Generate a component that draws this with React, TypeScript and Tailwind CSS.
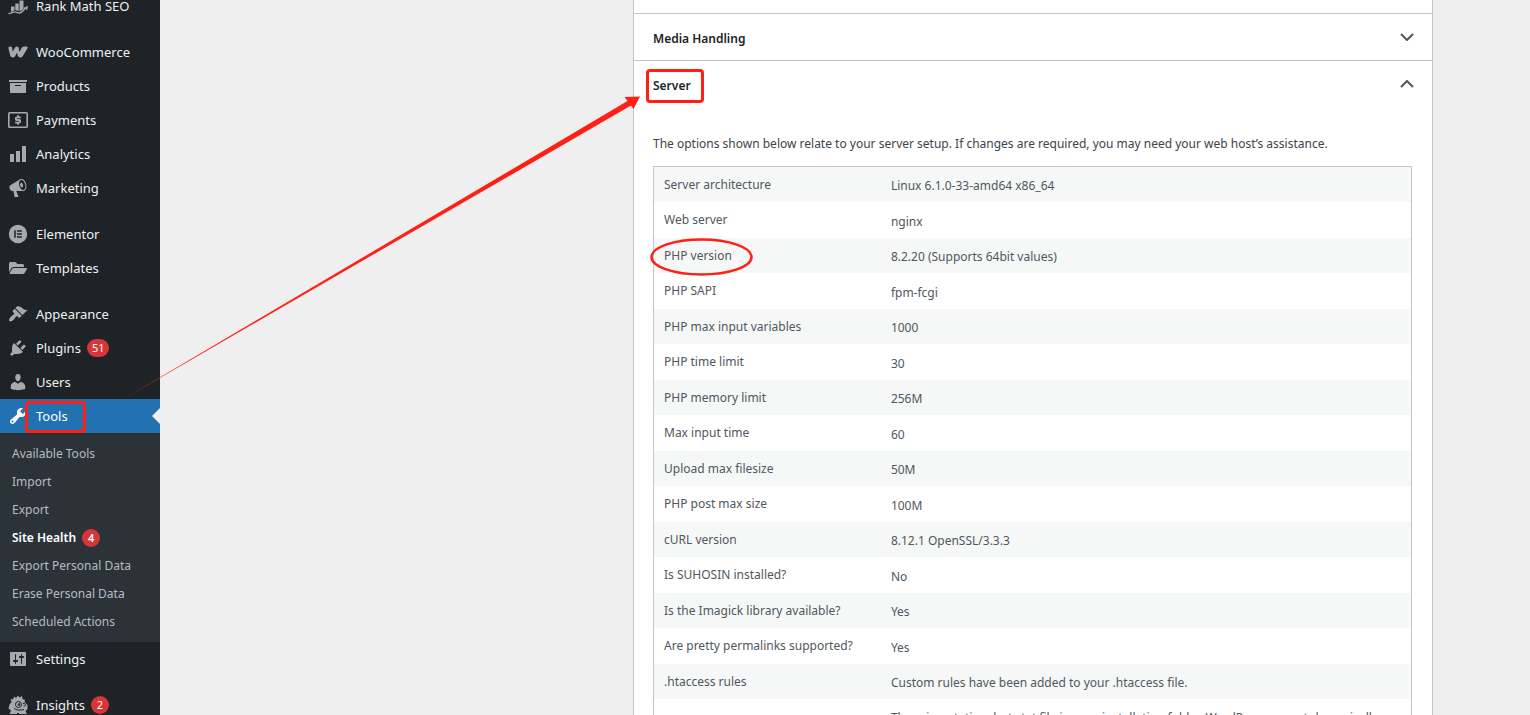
import React from 'react';
import { FaFolderOpen } from 'react-icons/fa';

const iconPaths = {
  products: 'M19 4v2H1V4h18zM2 7h16v10H2V7zm11 3V9H7v1h6z',
  analytics: 'M18 18V2h-4v16h4zm-6 0V7H8v11h4zm-6 0v-8H2v8h4z',
  marketing:
    'M18.15 5.94c.46 1.62.38 3.22-.02 4.48-.42 1.28-1.26 2.18-2.3 2.48-.16.06-.26.06-.4.06-.06.02-.12.02-.18.02-.06.02-.14.02-.22.02h-6.8l2.22 5.5c.02.14-.06.26-.14.34-.08.1-.24.16-.34.16H6.95c-.1 0-.26-.06-.34-.16-.08-.08-.16-.2-.14-.34l-1-5.5H4.25l-.02-.02c-.5.06-1.08-.18-1.54-.62s-.88-1.08-1.06-1.88c-.24-.8-.2-1.56-.02-2.2.18-.62.58-1.08 1.06-1.3l.02-.02 9-5.4c.1-.06.18-.1.24-.16.06-.04.14-.08.24-.12.16-.08.28-.12.5-.18 1.04-.3 2.24.1 3.22.98s1.84 2.24 2.26 3.86zm-2.58 5.98h-.02c.4-.1.74-.34 1.04-.7.58-.7.86-1.76.86-3.04 0-.64-.1-1.3-.28-1.98-.34-1.36-1.02-2.5-1.78-3.24s-1.68-1.1-2.46-.88c-.82.22-1.4.96-1.7 2-.32 1.04-.28 2.36.06 3.72.38 1.36 1 2.5 1.8 3.24.78.74 1.62 1.1 2.48.88zm-2.54-7.08c.22-.04.42-.02.62.04.38.16.76.48 1.02 1s.42 1.2.42 1.78c0 .3-.04.56-.12.8-.18.48-.44.84-.86.94-.34.1-.8-.06-1.14-.4s-.64-.86-.78-1.5c-.18-.62-.12-1.24.02-1.72s.48-.84.82-.94z',
  appearance:
    'M14.48 11.06L7.41 3.99l1.5-1.5c.5-.56 2.3-.47 3.51.32 1.21.8 1.43 1.28 2.91 2.1 1.18.64 2.45 1.26 4.45.85zm-.71.71L6.7 4.7 4.93 6.47c-.39.39-.39 1.02 0 1.41l1.06 1.06c.39.39.39 1.03 0 1.42-.6.6-1.43 1.11-2.21 1.69-.35.26-.7.53-1.01.84C1.43 14.23.4 16.08 1.4 17.07c.99 1 2.84-.03 4.18-1.36.31-.31.58-.66.85-1.02.57-.78 1.08-1.61 1.69-2.21.39-.39 1.02-.39 1.41 0l1.06 1.06c.39.39 1.02.39 1.41 0z',
  plugins:
    'M13.11 4.36L9.87 7.6 8 5.73l3.24-3.24c.35-.34 1.05-.2 1.56.32.52.51.66 1.21.31 1.55zm-8 1.77l.91-1.12 9.01 9.01-1.19.84c-.71.71-2.63 1.16-3.82 1.16H6.14L4.9 17.26c-.59.59-1.54.59-2.12 0-.59-.58-.59-1.53 0-2.12l1.24-1.24v-3.88c0-1.13.4-3.19 1.09-3.89zm7.26 3.97l3.24-3.24c.34-.35 1.04-.21 1.55.31.52.51.66 1.21.31 1.55l-3.24 3.25z',
  users:
    'M10 9.25c-2.27 0-2.73-3.44-2.73-3.44C7 4.02 7.82 2 9.97 2c2.16 0 2.98 2.02 2.71 3.81 0 0-.41 3.44-2.68 3.44zm0 2.57L12.72 10c2.39 0 4.52 2.33 4.52 4.53v2.49s-3.65 1.13-7.24 1.13c-3.65 0-7.24-1.13-7.24-1.13v-2.49c0-2.25 1.94-4.48 4.47-4.48z',
  tools:
    'M16.68 9.77c-1.34 1.34-3.3 1.67-4.95.99l-5.41 6.52c-.99.99-2.59.99-3.58 0s-.99-2.59 0-3.57l6.52-5.42c-.68-1.65-.35-3.61.99-4.95 1.28-1.28 3.12-1.62 4.72-1.06l-2.89 2.89 2.82 2.82 2.86-2.87c.53 1.58.18 3.39-1.08 4.65zM3.81 16.21c.4.39 1.04.39 1.43 0 .4-.4.4-1.04 0-1.43-.39-.4-1.03-.4-1.43 0-.39.39-.39 1.03 0 1.43z',
  settings:
    'M18 16V4c0-.55-.45-1-1-1H3c-.55 0-1 .45-1 1v12c0 .55.45 1 1 1h14c.55 0 1-.45 1-1zM8 11h1c.55 0 1 .45 1 1s-.45 1-1 1H8v1.5c0 .28-.22.5-.5.5s-.5-.22-.5-.5V13H6c-.55 0-1-.45-1-1s.45-1 1-1h1V5.5c0-.28.22-.5.5-.5s.5.22.5.5V11zm5-2h-1c-.55 0-1-.45-1-1s.45-1 1-1h1V5.5c0-.28.22-.5.5-.5s.5.22.5.5V7h1c.55 0 1 .45 1 1s-.45 1-1 1h-1v5.5c0 .28-.22.5-.5.5s-.5-.22-.5-.5V9z',
};

function PathIcon({ name }: { name: keyof typeof iconPaths }) {
  return (
    <svg viewBox="0 0 20 20" className="size-5" fill="currentColor" aria-hidden="true">
      <path d={iconPaths[name]} />
    </svg>
  );
}

function RankMathIcon() {
  return (
    <svg viewBox="0 0 20 20" className="size-5" fill="currentColor" aria-hidden="true">
      <path d="M3 10.500h3.500v4L3 16zM7.300 7.500h3.400v7.500l-3.400-1zM11.500 4.500h4v8.500L11.500 15.500z" />
      <path d="M0.500 17.500c2.500 0 4.500-1.700 6.200-1.700s2.500 1.200 4.300 1.200c2.500 0 4.500-2.500 6.500-5" fill="none" stroke="currentColor" strokeWidth="1.300" />
      <path d="M20 9.800l-.8 4.400-3.400-2.400z" />
    </svg>
  );
}

function WooIcon() {
  return (
    <svg viewBox="0 0 20 20" className="size-5" fill="currentColor" aria-hidden="true">
      <path d="M0.300 5.800Q0.800 4.500 2.500 4.500Q4 4.500 4.200 6L4.600 9.800L7.200 5.300Q7.800 4.500 9 4.500Q10.700 4.500 10.800 6L11.200 10L14 5.400Q14.700 4.500 16.200 4.500H18.500Q20.200 4.700 19.500 6.200L14.700 14.300Q13.800 15.500 12.400 15.500Q10.500 15.500 9.900 13.800L9 10.800L6.900 14.400Q6.200 15.500 4.600 15.500Q2.800 15.500 2.300 13.800Z" />
    </svg>
  );
}

function PaymentsIcon() {
  return (
    <svg viewBox="0 0 20 20" className="size-5" fill="none" stroke="currentColor" aria-hidden="true">
      <rect x="0.800" y="2.800" width="18.400" height="14.400" rx="0.800" strokeWidth="1.600" />
      <path d="M12.800 7.400H9a1.300 1.300 0 0 0 0 2.600h2a1.300 1.300 0 0 1 0 2.600H7.200M10 5.200v2.300M10 12.500v2.300" strokeWidth="1.800" />
    </svg>
  );
}

function ElementorIcon() {
  return (
    <svg viewBox="0 0 20 20" className="size-5" aria-hidden="true">
      <circle cx="10" cy="10" r="9.200" fill="currentColor" />
      <path d="M7 6.200v7.600M9 7h4.800M9 10h4.800M9 13h4.800" stroke="#1d2327" strokeWidth="1.500" />
    </svg>
  );
}

function InsightsIcon() {
  return (
    <svg viewBox="0 0 20 20" className="size-5" aria-hidden="true">
      <path d="M3.500 7l-1-3 2.500 .5L6 1.500 8 3l2-2.500L11.500 2.500 14 1l.5 3 2.500 1-.5 2 3 3v4l-2 2 1.500 3H11v-1H9v1H1.500L3 15.500l-2.500-2 1-4z" fill="currentColor" />
      <g fill="none" stroke="#1d2327">
        <circle cx="10.500" cy="9.500" r="3" />
        <path d="M15 8.500c1.500-.5 2.500.5 2.500 1.500s-1 1.500-2 1M6 13c2 2.500 5.500 2.500 10 1.500" />
      </g>
      <circle cx="11" cy="9.500" r="1.200" fill="#1d2327" />
    </svg>
  );
}

interface MenuEntry {
  label: string;
  icon: React.ReactNode;
  count?: number;
  current?: boolean;
}

const menuGroups: MenuEntry[][] = [
  [{ label: 'Rank Math SEO', icon: <RankMathIcon /> }],
  [
    { label: 'WooCommerce', icon: <WooIcon /> },
    { label: 'Products', icon: <PathIcon name="products" /> },
    { label: 'Payments', icon: <PaymentsIcon /> },
    { label: 'Analytics', icon: <PathIcon name="analytics" /> },
    { label: 'Marketing', icon: <PathIcon name="marketing" /> },
  ],
  [
    { label: 'Elementor', icon: <ElementorIcon /> },
    { label: 'Templates', icon: <FaFolderOpen className="size-[18px]" aria-hidden="true" /> },
  ],
  [
    { label: 'Appearance', icon: <PathIcon name="appearance" /> },
    { label: 'Plugins', icon: <PathIcon name="plugins" />, count: 51 },
    { label: 'Users', icon: <PathIcon name="users" /> },
    { label: 'Tools', icon: <PathIcon name="tools" />, current: true },
    { label: 'Settings', icon: <PathIcon name="settings" /> },
  ],
  [{ label: 'Insights', icon: <InsightsIcon />, count: 2 }],
];

const toolsSubmenu: { label: string; count?: number }[] = [
  { label: 'Available Tools' },
  { label: 'Import' },
  { label: 'Export' },
  { label: 'Site Health', count: 4 },
  { label: 'Export Personal Data' },
  { label: 'Erase Personal Data' },
  { label: 'Scheduled Actions' },
];

const serverInfo = [
  ['Server architecture', 'Linux 6.1.0-33-amd64 x86_64'],
  ['Web server', 'nginx'],
  ['PHP version', '8.2.20 (Supports 64bit values)'],
  ['PHP SAPI', 'fpm-fcgi'],
  ['PHP max input variables', '1000'],
  ['PHP time limit', '30'],
  ['PHP memory limit', '256M'],
  ['Max input time', '60'],
  ['Upload max filesize', '50M'],
  ['PHP post max size', '100M'],
  ['cURL version', '8.12.1 OpenSSL/3.3.3'],
  ['Is SUHOSIN installed?', 'No'],
  ['Is the Imagick library available?', 'Yes'],
  ['Are pretty permalinks supported?', 'Yes'],
  ['.htaccess rules', 'Custom rules have been added to your .htaccess file.'],
  [
    'robots.txt',
    'There is a static robots.txt file in your installation folder. WordPress cannot dynamically serve one.',
  ],
];

function CountBadge({ count }: { count: number }) {
  return (
    <span className="flex h-[18px] min-w-[18px] items-center justify-center rounded-full bg-[#d63638] px-[5px] text-[11px] text-white">
      {count}
    </span>
  );
}

function MenuItem({ item }: { item: MenuEntry }) {
  return (
    <li>
      <a
        href="#"
        aria-current={item.current ? 'true' : undefined}
        className={`relative flex h-[34px] items-center text-[13px] ${item.current ? 'bg-[#2271b1] text-white' : 'text-[#f0f0f1]'}`}
      >
        <span className={`flex w-9 justify-center ${item.current ? 'text-white' : 'text-[#a7aaad]'}`}>
          {item.icon}
        </span>
        <span className="mr-1.5 pt-0.5">{item.label}</span>
        {item.count && <CountBadge count={item.count} />}
        {item.current && (
          <>
            <span className="absolute top-[9px] right-0 border-y-8 border-r-8 border-y-transparent border-r-[#efefef]" />
            <span className="absolute top-0.5 left-[25px] h-8 w-[61px] rounded-sm border-3 border-[#ff1f14]" />
          </>
        )}
      </a>
      {item.current && (
        <ul className="bg-[#2c3338] pt-[7px] pb-1.5">
          {toolsSubmenu.map((sub) => (
            <li key={sub.label}>
              <a
                href="#"
                className={`flex h-7 items-center gap-1.5 px-3 text-xs ${sub.count ? 'font-semibold text-white' : 'text-[#b5bcc2]'}`}
              >
                {sub.label}
                {sub.count && <CountBadge count={sub.count} />}
              </a>
            </li>
          ))}
        </ul>
      )}
    </li>
  );
}

function Sidebar() {
  return (
    <nav className="w-40 shrink-0 bg-[#1d2327]" aria-label="Main menu">
      <div className="-mt-[11px] flex flex-col gap-3">
        {menuGroups.map((group) => (
          <ul key={group[0].label}>
            {group.map((item) => (
              <MenuItem key={item.label} item={item} />
            ))}
          </ul>
        ))}
      </div>
    </nav>
  );
}

function Chevron({ open }: { open?: boolean }) {
  return (
    <svg viewBox="0 0 14 8" className="h-2 w-3.5" fill="none" stroke="#50575e" strokeWidth="2" aria-hidden="true">
      <path d={open ? 'M1 7L7 1L13 7' : 'M1 1L7 7L13 1'} />
    </svg>
  );
}

function ServerTable() {
  return (
    <table className="w-full border border-[#c3c4c7] text-xs leading-5 text-[#50575e]">
      <tbody>
        {serverInfo.map(([label, value]) => (
          <tr key={label} className="odd:h-[35px] odd:bg-[#f6f7f7] even:h-9">
            <th scope="row" className="w-[30%] px-2.5 text-left font-normal">
              {label}
            </th>
            <td className="px-2.5 pt-[9px] pb-1.5">{value}</td>
          </tr>
        ))}
      </tbody>
    </table>
  );
}

function Arrow() {
  return (
    <svg className="pointer-events-none absolute top-0 left-0 h-[715px] w-[660px]" viewBox="0 0 660 715" aria-hidden="true">
      <path d="M120 401L627.500 101L624.500 97L640 96.500L633.500 109L631 105.500Z" fill="#ff1f14" />
    </svg>
  );
}

export default function App() {
  return (
    <div className="relative flex h-screen overflow-hidden bg-[#efefef] font-['Noto_Sans',sans-serif]">
      <Sidebar />
      <main className="flex flex-1 justify-end pr-[97px]">
        <div className="w-full max-w-[800px] border-x border-[#c3c4c7] bg-white text-xs text-[#1d2327]">
          <div className="h-[13px]" />
          <h3 className="border-t border-[#c3c4c7]">
            <button type="button" className="flex h-[46px] w-full items-center justify-between pr-[18px] pl-[19px] font-semibold">
              <span className="pt-1">Media Handling</span>
              <Chevron />
            </button>
          </h3>
          <h3 className="border-t border-[#c3c4c7]">
            <button type="button" className="flex h-[46px] w-full items-center justify-between pr-[18px] pl-[19px] font-semibold">
              <span className="relative pt-1">
                Server
                <span className="absolute -top-[5px] -left-[7px] h-[34px] w-[58px] rounded-sm border-3 border-[#ff1f14]" />
              </span>
              <Chevron open />
            </button>
          </h3>
          <div className="pt-[27px] pr-5 pl-[19px]">
            <p className="mb-3 leading-5 text-[#3c434a]">
              The options shown below relate to your server setup. If changes are required, you may need your web host’s assistance.
            </p>
            <div className="relative">
              <ServerTable />
              <svg className="absolute top-[71px] -left-[3px] h-10 w-[104px]" viewBox="0 0 104 40" fill="none" aria-hidden="true">
                <ellipse cx="51.500" cy="20" rx="50" ry="17.500" stroke="#ff1f14" strokeWidth="2.500" />
              </svg>
            </div>
          </div>
        </div>
      </main>
      <Arrow />
    </div>
  );
}
